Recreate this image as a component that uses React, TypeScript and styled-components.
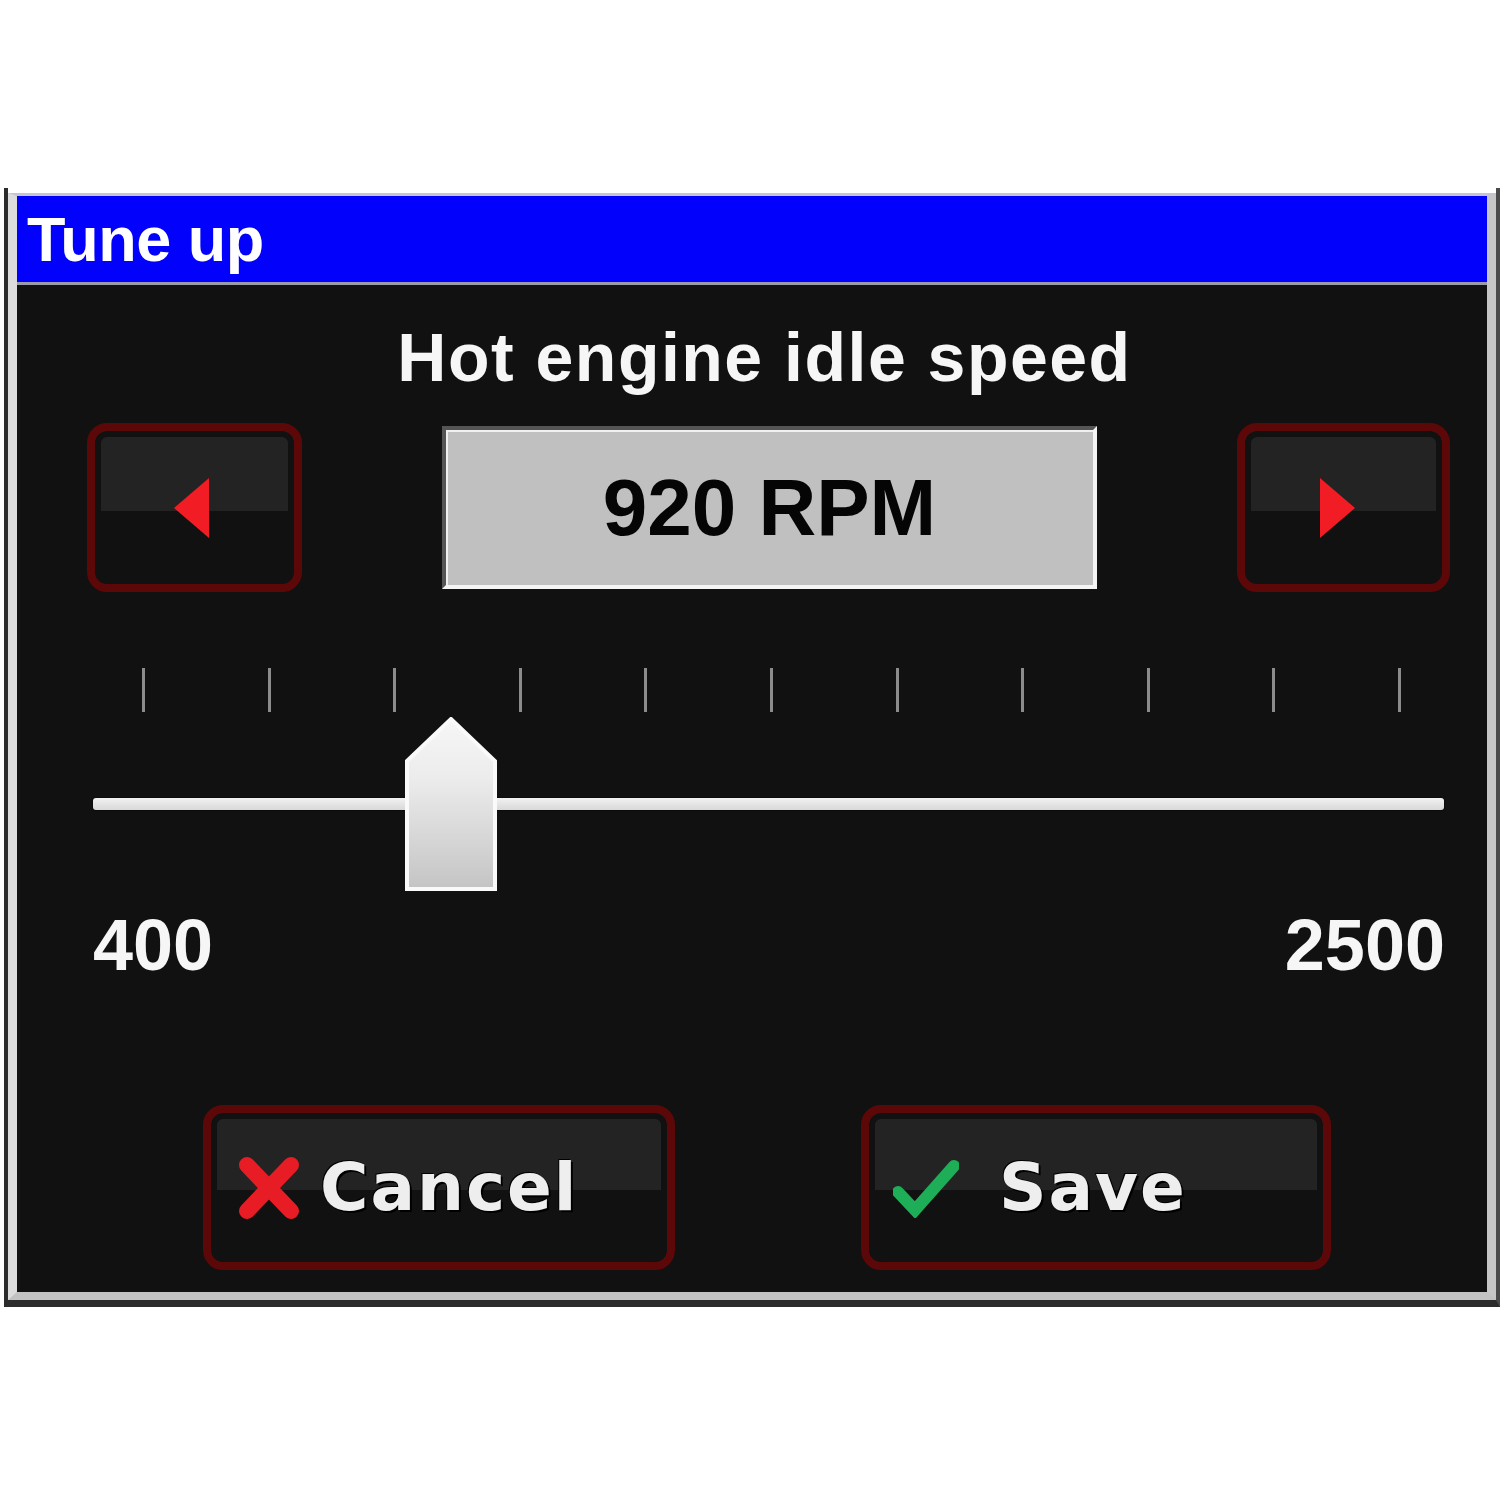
import React from "react";
import styled, { createGlobalStyle } from "styled-components";

const GlobalStyle = createGlobalStyle`
  html, body { margin: 0; padding: 0; background: #ffffff; }
  body { font-family: "Liberation Sans", Arial, sans-serif; }
  * { box-sizing: border-box; }
`;

const Window = styled.div`
  margin: 188px 0 0 4px;
  width: 1496px;
  padding-top: 5px;
  background: #ffffff;
  border-left: 4px solid #2c2c2c;
  border-right: 4px solid #4a4a4a;
  border-bottom: 7px solid #2c2c2c;
`;

const Frame = styled.div`
  border-top: 3px solid #c4c4d4;
  border-left: 9px solid #dcdcdc;
  border-right: 9px solid #c6c6c6;
  border-bottom: 8px solid #c2c2c2;
  box-shadow: inset 3px 0 0 #ffffff;
`;

const TitleBar = styled.div`
  height: 89px;
  background: #0202fc;
  border-bottom: 3px solid #9a9aa8;
  padding-left: 10px;
  color: #ffffff;
  font-family: "Liberation Sans", Arial, sans-serif;
  font-weight: 700;
  font-size: 63px;
  letter-spacing: -0.5px;
  line-height: 86px;
`;

const Body = styled.div`
  height: 1007px;
  background: #111111;
  padding: 38px 37px 22px 70px;
  display: flex;
  flex-direction: column;
`;

const Heading = styled.div`
  height: 68px;
  font-family: "Liberation Sans", Arial, sans-serif;
  font-weight: 700;
  font-size: 68px;
  line-height: 68px;
  letter-spacing: 1.5px;
  color: #f6f6f6;
  text-align: center;
  padding-right: 8px;
`;

const ControlRow = styled.div`
  margin-top: 32px;
  height: 169px;
  display: grid;
  grid-template-columns: 215px 655px 213px;
  justify-content: space-between;
  align-items: center;
`;

const RedButton = styled.div<{ $w?: number }>`
  height: 100%;
  width: ${(p) => (p.$w ? `${p.$w}px` : "auto")};
  border: 8px solid #5c0808;
  border-radius: 20px;
  background: linear-gradient(#232323 0 52%, #111111 52% 100%);
  box-shadow: inset 0 0 0 6px #111111;
  display: flex;
  align-items: center;
`;

const ArrowButton = styled(RedButton)`
  justify-content: center;
`;

const ValueBox = styled.div`
  height: 163px;
  background: #c0c0c0;
  border-top: 4px solid #555555;
  border-left: 4px solid #555555;
  border-bottom: 4px solid #f4f4f4;
  border-right: 4px solid #f4f4f4;
  box-shadow: inset 2px 2px 0 #f0f0f0;
  display: flex;
  align-items: center;
  justify-content: center;
  font-family: "Liberation Sans", Arial, sans-serif;
  font-weight: 700;
  font-size: 80px;
  color: #050505;
  line-height: 1;
`;

const TickRow = styled.div`
  margin: 76px 49px 0 55px;
  height: 44px;
  display: flex;
  justify-content: space-between;
`;

const Tick = styled.div`
  width: 3px;
  height: 44px;
  background: #8c8c8c;
`;

const Slider = styled.div`
  position: relative;
  margin: 5px 6px 0 6px;
  height: 173px;
`;

const Track = styled.div`
  margin-top: 81px;
  height: 12px;
  border-radius: 3px;
  background: linear-gradient(#f2f2f2, #d8d8d8);
  box-shadow: 0 0 2px #000;
`;

const Thumb = styled.svg`
  position: absolute;
  top: 0;
  width: 92px;
  height: 175px;
`;

const LabelRow = styled.div`
  margin: 19px 5px 0 6px;
  height: 72px;
  display: flex;
  justify-content: space-between;
  font-family: "Liberation Sans", Arial, sans-serif;
  font-weight: 700;
  font-size: 72px;
  line-height: 72px;
  color: #f6f6f6;
`;

const ActionRow = styled.div`
  margin-top: 124px;
  height: 165px;
  display: flex;
  justify-content: center;
  gap: 186px;
  padding-right: 3px;
`;

const ActionButton = styled(RedButton)<{ $pad: number; $gap: number }>`
  padding-left: ${(p) => p.$pad}px;
  gap: ${(p) => p.$gap}px;
`;

const ActionLabel = styled.span`
  font-family: "DejaVu Sans", Verdana, sans-serif;
  font-weight: 700;
  font-size: 66px;
  line-height: 66px;
  letter-spacing: 2px;
  color: #eeeeee;
  text-shadow: 2px 2px 0 #000, -1px -1px 0 #000;
`;

const MIN = 400;
const MAX = 2500;
const VALUE = 920;

export default function App() {
  const pct = (VALUE - MIN) / (MAX - MIN);
  const thumbLeft = pct * (1351 - 90);
  return (
    <>
      <GlobalStyle />
      <Window>
        <Frame>
          <TitleBar>Tune up</TitleBar>
          <Body>
            <Heading>Hot engine idle speed</Heading>
            <ControlRow>
              <ArrowButton>
                <svg width="40" height="62" viewBox="0 0 40 62" style={{ marginRight: 6 }}>
                  <polygon points="2,31 37,1 37,61" fill="#f21c24" />
                </svg>
              </ArrowButton>
              <ValueBox>920 RPM</ValueBox>
              <ArrowButton>
                <svg width="40" height="62" viewBox="0 0 40 62" style={{ marginRight: 14 }}>
                  <polygon points="3,1 38,31 3,61" fill="#f21c24" />
                </svg>
              </ArrowButton>
            </ControlRow>
            <TickRow>
              {Array.from({ length: 11 }).map((_, i) => (
                <Tick key={i} />
              ))}
            </TickRow>
            <Slider>
              <Track />
              <Thumb viewBox="0 0 92 175" style={{ left: thumbLeft }}>
                <defs>
                  <linearGradient id="thumbFill" x1="0" y1="0" x2="0" y2="1">
                    <stop offset="0" stopColor="#f6f6f6" />
                    <stop offset="0.35" stopColor="#ececec" />
                    <stop offset="1" stopColor="#c4c4c4" />
                  </linearGradient>
                </defs>
                <polygon
                  points="2,44 46,2 90,44 90,172 2,172"
                  fill="url(#thumbFill)"
                  stroke="#fafafa"
                  strokeWidth="4"
                  strokeLinejoin="miter"
                />
              </Thumb>
            </Slider>
            <LabelRow>
              <span>400</span>
              <span>2500</span>
            </LabelRow>
            <ActionRow>
              <ActionButton $w={472} $pad={27} $gap={20}>
                <svg width="62" height="64" viewBox="0 0 62 64">
                  <path d="M9 9 L53 55 M53 9 L9 55" stroke="#e81c24" strokeWidth="16" strokeLinecap="round" />
                </svg>
                <ActionLabel>Cancel</ActionLabel>
              </ActionButton>
              <ActionButton $w={470} $pad={24} $gap={40}>
                <svg width="66" height="60" viewBox="0 0 66 60">
                  <path d="M5 34 L22 52 L61 8" stroke="#1fae58" strokeWidth="12" fill="none" strokeLinejoin="miter" strokeLinecap="round" />
                </svg>
                <ActionLabel>Save</ActionLabel>
              </ActionButton>
            </ActionRow>
          </Body>
        </Frame>
      </Window>
    </>
  );
}
